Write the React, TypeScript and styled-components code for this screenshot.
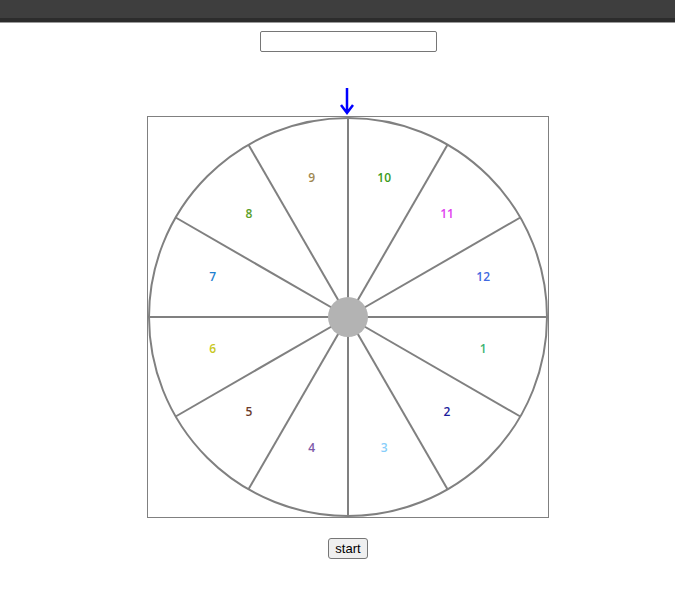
import styled, { createGlobalStyle } from 'styled-components'

const GlobalStyle = createGlobalStyle`
  body {
    margin: 0;
    background: #fff;
    font-family: "Liberation Sans", Arial, sans-serif;
  }
`

const TopBar = styled.div`
  height: 18px;
  background: #3e3e3e;
  border-bottom: 4px solid #2c2c2c;
  box-shadow: 0 1px 0 #9a9a9a;
`

const Page = styled.div`
  display: flex;
  flex-direction: column;
  align-items: center;
  padding-left: 21px;
`

const NameInput = styled.input`
  box-sizing: border-box;
  width: 177px;
  height: 21px;
  margin-top: 9px;
  border: 1px solid #767676;
  border-radius: 2px;
  padding: 1px 2px;
`

const Pointer = styled.div`
  height: 64px;
  display: flex;
  align-items: flex-end;
  justify-content: center;
  width: 402px;
`

const WheelBox = styled.div`
  width: 400px;
  height: 400px;
  border: 1px solid #808080;
`

const StartButton = styled.button`
  margin-top: 20px;
  height: 21px;
  padding: 1px 6px;
  font-family: "Liberation Sans", Arial, sans-serif;
  font-size: 13px;
  color: #000;
  background: #efefef;
  border: 1px solid #767676;
  border-radius: 3px;
`

const Label = styled.text`
  font-family: "Open Sans", "Noto Sans", sans-serif;
  font-size: 12px;
  font-weight: 600;
`

const segments = [
  { n: 10, color: '#3a9a1a' },
  { n: 11, color: '#e040f0' },
  { n: 12, color: '#4169e1' },
  { n: 1, color: '#3cb371' },
  { n: 2, color: '#1c1c9c' },
  { n: 3, color: '#87cefa' },
  { n: 4, color: '#7d5aa8' },
  { n: 5, color: '#6b3a2a' },
  { n: 6, color: '#c8c81e' },
  { n: 7, color: '#1e80d0' },
  { n: 8, color: '#5aa02a' },
  { n: 9, color: '#a08850' },
]

const Wheel = () => {
  const c = 200
  const r = 199
  return (
    <svg width="400" height="400" viewBox="0 0 400 400">
      <circle cx={c} cy={c} r={r} fill="none" stroke="#808080" strokeWidth="2" />
      {segments.map((_, i) => {
        const a = (i * 30 * Math.PI) / 180
        return (
          <line
            key={i}
            x1={c}
            y1={c}
            x2={c + r * Math.sin(a)}
            y2={c - r * Math.cos(a)}
            stroke="#808080"
            strokeWidth="2"
          />
        )
      })}
      {segments.map((s, i) => {
        const a = ((i * 30 + 15) * Math.PI) / 180
        return (
          <Label
            key={s.n}
            x={c + 140 * Math.sin(a)}
            y={c - 140 * Math.cos(a)}
            fill={s.color}
            textAnchor="middle"
          >
            {s.n}
          </Label>
        )
      })}
      <circle cx={c} cy={c} r="20" fill="#b3b3b3" />
    </svg>
  )
}

const App = () => (
  <>
    <GlobalStyle />
    <TopBar />
    <Page>
      <NameInput type="text" />
      <Pointer>
        <svg width="16" height="30" viewBox="0 0 16 30">
          <path d="M7 2 V27 M1 19 L7 27 L13 19" fill="none" stroke="#0000ff" strokeWidth="2.5" />
        </svg>
      </Pointer>
      <WheelBox>
        <Wheel />
      </WheelBox>
      <StartButton>start</StartButton>
    </Page>
  </>
)

export default App
